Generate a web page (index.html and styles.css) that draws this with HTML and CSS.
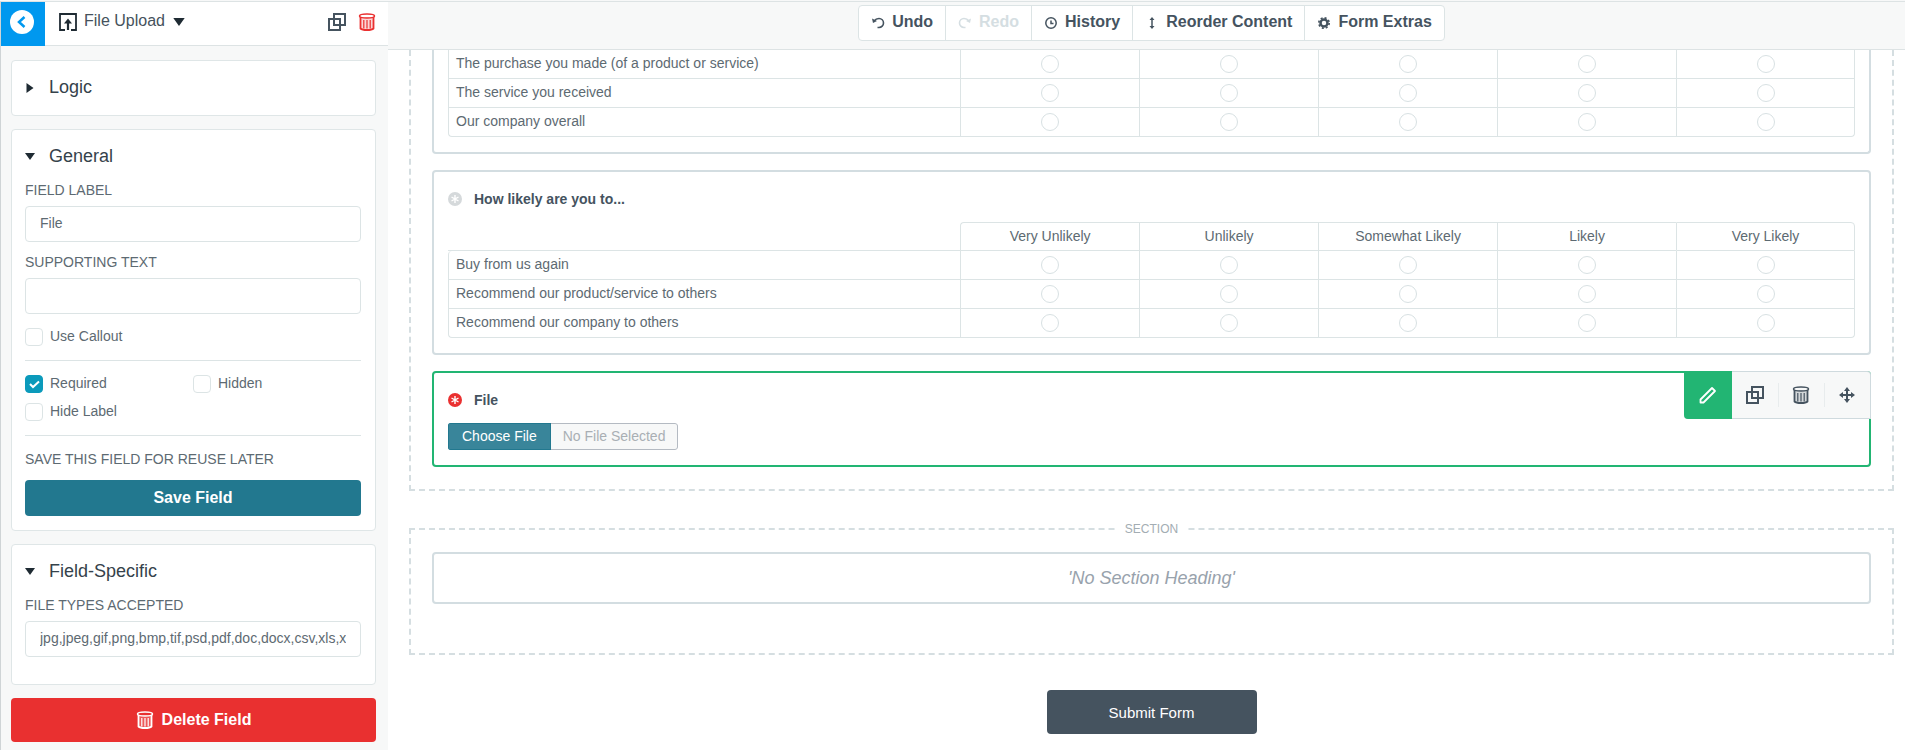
FILE: index.html
```html
<!DOCTYPE html>
<html lang="en">
<head>
    <meta charset="UTF-8">
    <meta name="viewport" content="width=device-width, initial-scale=1.0">
    <title>Form Builder</title>
    <link rel="stylesheet" href="styles.css">
</head>
<body>
    <!-- shared icons -->
    <svg class="sprite" aria-hidden="true">
        <symbol id="icon-copy" viewBox="0 0 18 18">
            <path d="M6 1h11v11H6zM1 6h11v11H1z" fill="none" stroke="currentColor" stroke-width="2"/>
        </symbol>
        <symbol id="icon-trash" viewBox="0 0 18 18">
            <path d="M2.500 4h13v12q-2 1.500-6.500 1.500T2.500 16z" fill="currentColor" fill-opacity="0.2"/>
            <ellipse cx="9" cy="3" rx="7.500" ry="2" fill="none" stroke="currentColor" stroke-width="1.500"/>
            <path d="M2.500 4v11.500q1.500 1.500 6.500 1.500t6.500-1.500V4" fill="none" stroke="currentColor" stroke-width="1.800"/>
            <path d="M5.800 7v8.500M9 7v8.500M12.200 7v8.500" fill="none" stroke="currentColor" stroke-width="1.200"/>
        </symbol>
        <symbol id="icon-required" viewBox="0 0 14 14">
            <circle cx="7" cy="7" r="7" fill="currentColor"/>
            <path d="M7 3v8M3.500 5l7 4M10.500 5l-7 4" stroke="#fff" stroke-width="1.4" fill="none"/>
        </symbol>
        <symbol id="icon-down" viewBox="0 0 10 7">
            <path d="M0 0h10L5 7z" fill="#1f2b33"/>
        </symbol>
        <symbol id="icon-right" viewBox="0 0 7 10">
            <path d="M0 0v10l7-5z" fill="#1f2b33"/>
        </symbol>
    </svg>

    <div class="builder">
        <aside class="sidebar">
            <div class="sidebar-header">
                <button class="back" aria-label="Back">
                    <svg width="24" height="24" viewBox="0 0 24 24"><circle cx="12" cy="12" r="12" fill="#fff"/><path d="M14.500 7l-5.500 5 5.500 5" fill="none" stroke="#0098ef" stroke-width="2.500"/></svg>
                </button>
                <svg class="type-icon" width="18" height="18" viewBox="0 0 18 18"><path d="M6 17H1V1h16v16h-5" fill="none" stroke="#1f2b33" stroke-width="1.800"/><path d="M9 17V8" stroke="#1f2b33" stroke-width="2.200"/><path d="M5 10.500L9 5.500l4 5z" fill="#1f2b33"/></svg>
                <select class="type-select" aria-label="Field type">
                    <option>File Upload</option>
                </select>
                <svg class="type-caret" width="12" height="8"><use href="#icon-down"/></svg>
                <button class="icon-button" aria-label="Duplicate field"><svg width="18" height="18"><use href="#icon-copy"/></svg></button>
                <button class="icon-button danger" aria-label="Delete"><svg width="18" height="18"><use href="#icon-trash"/></svg></button>
            </div>

            <div class="panels">
                <section class="panel">
                    <button class="panel-title"><svg class="arrow" width="10" height="10"><use href="#icon-right"/></svg>Logic</button>
                </section>

                <section class="panel">
                    <button class="panel-title"><svg class="arrow" width="10" height="7"><use href="#icon-down"/></svg>General</button>
                    <label class="caption" for="fieldLabel">FIELD LABEL</label>
                    <input class="text-input" type="text" id="fieldLabel" value="File">
                    <label class="caption" for="supportingText">SUPPORTING TEXT</label>
                    <input class="text-input" type="text" id="supportingText">
                    <div class="checks">
                        <label class="check"><input type="checkbox"><span>Use Callout</span></label>
                    </div>
                    <div class="checks">
                        <label class="check"><input type="checkbox" checked><span>Required</span></label>
                        <label class="check"><input type="checkbox"><span>Hidden</span></label>
                        <label class="check"><input type="checkbox"><span>Hide Label</span></label>
                    </div>
                    <p class="caption save-caption">SAVE THIS FIELD FOR REUSE LATER</p>
                    <button class="save">Save Field</button>
                </section>

                <section class="panel panel-specific">
                    <button class="panel-title"><svg class="arrow" width="10" height="7"><use href="#icon-down"/></svg>Field-Specific</button>
                    <label class="caption" for="fileTypes">FILE TYPES ACCEPTED</label>
                    <input class="text-input" type="text" id="fileTypes" value="jpg,jpeg,gif,png,bmp,tif,psd,pdf,doc,docx,csv,xls,xlsx">
                </section>

                <button class="delete"><svg width="18" height="18"><use href="#icon-trash"/></svg>Delete Field</button>
            </div>
        </aside>

        <main class="main">
            <div class="topbar">
                <div class="actions">
                    <button><svg width="14" height="14" viewBox="0 0 14 14"><path d="M3 6q2-2.500 5-2.500a4.300 4.300 0 0 1 0 9H6.500" fill="none" stroke="currentColor" stroke-width="1.600"/><path d="M1 3.500l1 4.500 4-2z" fill="currentColor"/></svg>Undo</button>
                    <button disabled><svg width="14" height="14" viewBox="0 0 14 14"><path d="M11 6Q9 3.500 6 3.500a4.300 4.300 0 0 0 0 9h1.500" fill="none" stroke="currentColor" stroke-width="1.600"/><path d="M13 3.500l-1 4.500-4-2z" fill="currentColor"/></svg>Redo</button>
                    <button><svg width="14" height="14" viewBox="0 0 14 14"><circle cx="7" cy="8" r="5.200" fill="none" stroke="currentColor" stroke-width="1.500"/><path d="M7 5.500v3h2.500" fill="none" stroke="currentColor" stroke-width="1.500"/></svg>History</button>
                    <button><svg width="14" height="14" viewBox="0 0 14 14"><path d="M7 4v8" stroke="currentColor" stroke-width="1.500"/><path d="M4.500 5L7 2l2.500 3zM4.500 11L7 14l2.500-3z" fill="currentColor"/></svg>Reorder Content</button>
                    <button><svg width="14" height="14" viewBox="0 0 14 14"><circle cx="7" cy="8" r="3.500" fill="none" stroke="currentColor" stroke-width="2.500"/><circle cx="7" cy="8" r="5.200" fill="none" stroke="currentColor" stroke-width="1.600" stroke-dasharray="2.040 2.040"/></svg>Form Extras</button>
                </div>
            </div>

            <div class="canvas">
                <div class="group group-first">
                    <div class="field field-first">
                        <table class="matrix">
                            <colgroup><col class="col-question"><col span="5"></colgroup>
                            <tbody>
                                <tr>
                                    <th scope="row">The purchase you made (of a product or service)</th>
                                    <td><input type="radio" name="purchase" aria-label="1"></td>
                                    <td><input type="radio" name="purchase" aria-label="2"></td>
                                    <td><input type="radio" name="purchase" aria-label="3"></td>
                                    <td><input type="radio" name="purchase" aria-label="4"></td>
                                    <td><input type="radio" name="purchase" aria-label="5"></td>
                                </tr>
                                <tr>
                                    <th scope="row">The service you received</th>
                                    <td><input type="radio" name="service" aria-label="1"></td>
                                    <td><input type="radio" name="service" aria-label="2"></td>
                                    <td><input type="radio" name="service" aria-label="3"></td>
                                    <td><input type="radio" name="service" aria-label="4"></td>
                                    <td><input type="radio" name="service" aria-label="5"></td>
                                </tr>
                                <tr>
                                    <th scope="row">Our company overall</th>
                                    <td><input type="radio" name="overall" aria-label="1"></td>
                                    <td><input type="radio" name="overall" aria-label="2"></td>
                                    <td><input type="radio" name="overall" aria-label="3"></td>
                                    <td><input type="radio" name="overall" aria-label="4"></td>
                                    <td><input type="radio" name="overall" aria-label="5"></td>
                                </tr>
                            </tbody>
                        </table>
                    </div>

                    <div class="field">
                        <h3 class="question"><svg class="optional" width="14" height="14"><use href="#icon-required"/></svg>How likely are you to...</h3>
                        <table class="matrix">
                            <colgroup><col class="col-question"><col span="5"></colgroup>
                            <thead>
                                <tr>
                                    <td></td>
                                    <th scope="col">Very Unlikely</th>
                                    <th scope="col">Unlikely</th>
                                    <th scope="col">Somewhat Likely</th>
                                    <th scope="col">Likely</th>
                                    <th scope="col">Very Likely</th>
                                </tr>
                            </thead>
                            <tbody>
                                <tr>
                                    <th scope="row">Buy from us again</th>
                                    <td><input type="radio" name="buy" aria-label="Very Unlikely"></td>
                                    <td><input type="radio" name="buy" aria-label="Unlikely"></td>
                                    <td><input type="radio" name="buy" aria-label="Somewhat Likely"></td>
                                    <td><input type="radio" name="buy" aria-label="Likely"></td>
                                    <td><input type="radio" name="buy" aria-label="Very Likely"></td>
                                </tr>
                                <tr>
                                    <th scope="row">Recommend our product/service to others</th>
                                    <td><input type="radio" name="product" aria-label="Very Unlikely"></td>
                                    <td><input type="radio" name="product" aria-label="Unlikely"></td>
                                    <td><input type="radio" name="product" aria-label="Somewhat Likely"></td>
                                    <td><input type="radio" name="product" aria-label="Likely"></td>
                                    <td><input type="radio" name="product" aria-label="Very Likely"></td>
                                </tr>
                                <tr>
                                    <th scope="row">Recommend our company to others</th>
                                    <td><input type="radio" name="company" aria-label="Very Unlikely"></td>
                                    <td><input type="radio" name="company" aria-label="Unlikely"></td>
                                    <td><input type="radio" name="company" aria-label="Somewhat Likely"></td>
                                    <td><input type="radio" name="company" aria-label="Likely"></td>
                                    <td><input type="radio" name="company" aria-label="Very Likely"></td>
                                </tr>
                            </tbody>
                        </table>
                    </div>

                    <div class="field field-active">
                        <h3 class="question"><svg class="required" width="14" height="14"><use href="#icon-required"/></svg>File</h3>
                        <label class="file-picker">
                            <input type="file">
                            <span class="file-button">Choose File</span>
                            <span class="file-name">No File Selected</span>
                        </label>
                        <div class="field-tools">
                            <button class="edit" aria-label="Edit"><svg width="20" height="20" viewBox="0 0 20 20"><path d="M2.500 17.500v-3L14 3l3 3L5.500 17.500z" fill="none" stroke="currentColor" stroke-width="1.800" stroke-linejoin="round"/></svg></button>
                            <button aria-label="Duplicate"><svg width="18" height="18"><use href="#icon-copy"/></svg></button>
                            <button aria-label="Delete"><svg width="18" height="18"><use href="#icon-trash"/></svg></button>
                            <button aria-label="Move"><svg width="16" height="16" viewBox="0 0 16 16"><path d="M8 2v12M2 8h12" stroke="currentColor" stroke-width="2"/><path d="M5 4l3-4 3 4zM5 12l3 4 3-4zM4 5L0 8l4 3zM12 5l4 3-4 3z" fill="currentColor"/></svg></button>
                        </div>
                    </div>
                </div>

                <fieldset class="group group-section">
                    <legend>SECTION</legend>
                    <div class="field section-heading">'No Section Heading'</div>
                </fieldset>

                <button class="submit">Submit Form</button>
            </div>
        </main>
    </div>
</body>
</html>
```
FILE: styles.css
```css
* {
    box-sizing: border-box;
}
body {
    margin: 0;
    font-family: "Liberation Sans", Arial, sans-serif;
    font-size: 14px;
    color: #5d6a72;
    background-color: #fff;
}
button, input, select {
    font-family: inherit;
    color: inherit;
    margin: 0;
}
button {
    display: flex;
    align-items: center;
    justify-content: center;
    padding: 0;
    border: none;
    background: none;
    cursor: pointer;
}
svg {
    flex: none;
}
.sprite {
    display: none;
}
.builder {
    display: flex;
    min-height: 100vh;
    padding-top: 1px;
    background-color: #f7f8f8;
}

/* sidebar */
.sidebar {
    width: 388px;
    flex: none;
    border-top: 1px solid #dde3e4;
    border-left: 1px solid #cfd4d6;
}
.sidebar-header {
    display: flex;
    align-items: center;
    height: 44px;
    padding: 0 12px 4px 0;
    background-color: #fff;
    border-bottom: 1px solid #dde3e4;
}
.back {
    width: 44px;
    height: 44px;
    margin-bottom: -4px;
    padding: 0 2px 4px 0;
    background-color: #0098ef;
}
.type-icon {
    margin-left: 14px;
}
.type-select {
    appearance: none;
    border: none;
    margin: 0 8px 0 7px;
    padding: 0 0 2px;
    height: 32px;
    background: none;
    font-size: 16px;
    color: #45525c;
}
.type-caret {
    margin-right: auto;
}
.icon-button {
    margin-left: 12px;
    color: #45535f;
}
.danger {
    color: #ea3030;
}
.panels {
    display: flex;
    flex-direction: column;
    gap: 13px;
    padding: 14px 12px 8px 10px;
}
.panel {
    padding: 13px 14px 14px 13px;
    background-color: #fff;
    border: 1px solid #dfe6e7;
    border-radius: 4px;
}
.panel-specific {
    padding-bottom: 27px;
}
.panel-title {
    justify-content: flex-start;
    width: 100%;
    height: 27px;
    font-size: 18px;
    color: #35424b;
}
.arrow {
    margin-right: 14px;
}
.caption {
    display: block;
    height: 36px;
    padding-top: 12px;
    line-height: 16px;
}
.text-input {
    display: block;
    width: 100%;
    height: 36px;
    padding: 0 14px 2px;
    border: 1px solid #dce4e5;
    border-radius: 4px;
    background-color: #fff;
    font-size: 14px;
}
.checks {
    display: grid;
    grid-template-columns: 1fr 1fr;
    row-gap: 10px;
    padding: 14px 0;
    border-bottom: 1px solid #dce4e5;
}
.check {
    display: flex;
    align-items: center;
    gap: 7px;
    height: 18px;
}
.check span {
    padding-bottom: 2px;
}
.check input {
    appearance: none;
    width: 18px;
    height: 18px;
    border: 1px solid #dce4e5;
    border-radius: 4px;
    background-color: #fff;
}
.check input:checked {
    border-color: #0b9abb;
    background: #0b9abb url("data:image/svg+xml,%3Csvg xmlns='http://www.w3.org/2000/svg' viewBox='0 0 16 16'%3E%3Cpath d='M4 8l3 3 6-5.500' fill='none' stroke='white' stroke-width='2'/%3E%3C/svg%3E");
}
.save-caption {
    height: 44px;
    margin: 0;
    padding-top: 15px;
}
.save {
    width: 100%;
    height: 36px;
    border-radius: 4px;
    background-color: #22788f;
    font-size: 16px;
    font-weight: bold;
    color: #fff;
}
.delete {
    gap: 8px;
    height: 44px;
    border-radius: 4px;
    background-color: #e93030;
    font-size: 16px;
    font-weight: bold;
    color: #fff;
}

/* top bar */
.main {
    flex: 1;
    min-width: 0;
    display: flex;
    flex-direction: column;
}
.topbar {
    display: flex;
    justify-content: center;
    align-items: flex-start;
    height: 49px;
    padding: 3px 10px 0 20px;
    border-top: 1px solid #dde3e4;
    border-bottom: 1px solid #dde3e4;
}
.actions {
    display: flex;
    height: 36px;
    border: 1px solid #dce4e5;
    border-radius: 4px;
    background-color: #fff;
}
.actions button {
    gap: 7px;
    padding: 0 12px 2px;
    font-size: 16px;
    font-weight: bold;
    color: #45535f;
}
.actions button + button {
    border-left: 1px solid #dce4e5;
}
.actions button:disabled {
    color: #d5dee2;
}

/* form */
.canvas {
    flex: 1;
    padding: 0 11px 16px 21px;
    background-color: #fff;
}
.group {
    min-width: 0;
    margin: 0;
    padding: 0 21px 22px;
    border: 2px dashed #d5dee1;
}
.group-first {
    border-top: none;
}
.field {
    position: relative;
    padding: 20px 14px 15px;
    margin-bottom: 16px;
    border: 2px solid #d3dde1;
    border-radius: 4px;
}
.field-first {
    padding-top: 0;
    border-top: none;
    border-radius: 0 0 4px 4px;
}
.field-active {
    margin-bottom: 0;
    border-color: #22b573;
}
.question {
    display: flex;
    align-items: center;
    gap: 12px;
    margin: 0 0 14px;
    height: 16px;
    padding-bottom: 2px;
    font-size: 14px;
    color: #45535f;
}
.optional {
    color: #d5d9db;
}
.required {
    color: #ea3030;
}
.matrix {
    width: 100%;
    table-layout: fixed;
    border-collapse: separate;
    border-spacing: 0;
}
.col-question {
    width: 36.4%;
}
.matrix th, .matrix td {
    height: 29px;
    padding: 0;
    border-left: 1px solid #dce4e5;
    border-bottom: 1px solid #dce4e5;
    font-weight: normal;
    text-align: center;
}
.matrix th {
    padding-bottom: 2px;
}
.matrix tr > :last-child {
    border-right: 1px solid #dce4e5;
}
.matrix tbody th {
    padding-left: 7px;
    text-align: left;
}
.matrix thead th {
    height: 28px;
    border-top: 1px solid #dce4e5;
}
.matrix thead td {
    border-left: none;
}
.matrix thead th:nth-child(2), .matrix thead + tbody tr:first-child th {
    border-top-left-radius: 4px;
}
.matrix thead th:last-child {
    border-top-right-radius: 4px;
}
.matrix tbody tr:last-child th {
    border-bottom-left-radius: 4px;
}
.matrix tbody tr:last-child td:last-child {
    border-bottom-right-radius: 4px;
}
.matrix input {
    appearance: none;
    display: block;
    width: 18px;
    height: 18px;
    margin: 0 auto;
    border: 1px solid #d8e1e3;
    border-radius: 50%;
}
.file-picker {
    position: relative;
    display: inline-flex;
    height: 27px;
    line-height: 24px;
    border-radius: 3px;
    overflow: hidden;
    vertical-align: top;
}
.file-picker input {
    position: absolute;
    inset: 0;
    width: 100%;
    opacity: 0;
}
.file-button {
    padding: 0 13px;
    border: 1px solid #22788f;
    background-color: #39859a;
    color: #fff;
}
.file-name {
    padding: 0 12px;
    border: 1px solid #b4bac2;
    border-left: none;
    border-radius: 0 3px 3px 0;
    background-color: #f7f8f8;
    color: #a9afb4;
}
.field-tools {
    position: absolute;
    top: -2px;
    right: -2px;
    display: flex;
    height: 48px;
    border: 1px solid #cfdade;
    border-left: none;
    border-radius: 0 4px 0 4px;
    background-color: #f7f8f8;
}
.field-tools button {
    width: 46px;
    color: #45535f;
}
.field-tools .edit {
    width: 48px;
    margin: -1px 0;
    border-radius: 0 0 0 4px;
    background-color: #22b573;
    color: #fff;
}
.field-tools .edit ~ button + button {
    background: linear-gradient(#e8eced, #e8eced) left center / 1px 24px no-repeat;
}
.group-section {
    margin-top: 30px;
    padding-bottom: 49px;
}
.group-section legend {
    margin: 0 auto;
    padding: 0 10px;
    line-height: 16px;
    font-size: 12px;
    color: #a3adb3;
}
.section-heading {
    margin: 15px 0 0;
    padding: 13px;
    line-height: 22px;
    text-align: center;
    font-size: 18px;
    font-style: italic;
    color: #98a2ac;
}
.submit {
    width: 210px;
    height: 44px;
    margin: 35px auto 0;
    border-radius: 4px;
    background-color: #45535f;
    font-size: 15px;
    color: #fff;
}
```
